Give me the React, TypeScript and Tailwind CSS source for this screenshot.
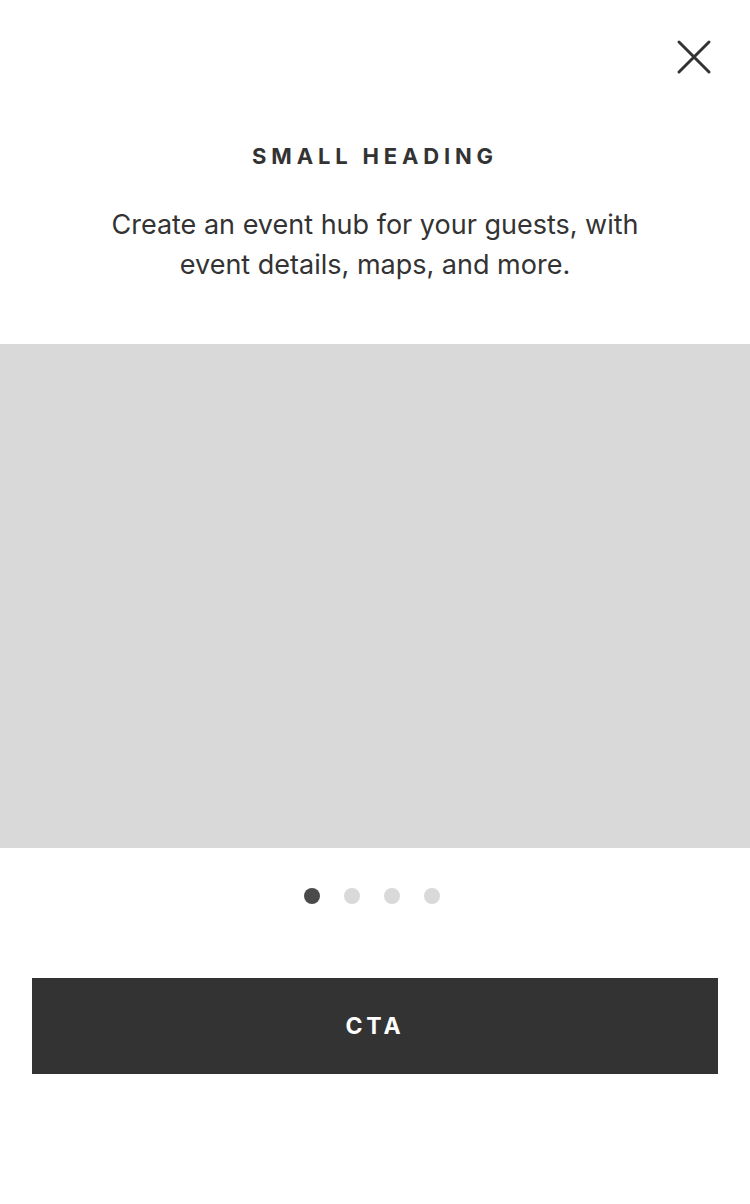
const slides = [0, 1, 2, 3];

export default function App() {
  return (
    <div className="w-[750px] h-[1204px] bg-white flex flex-col font-['Inter',sans-serif] text-[#333333]">
      <div className="flex justify-end pt-[38px] pr-[37px]">
        <button aria-label="Close" className="w-[38px] h-[38px] flex items-center justify-center">
          <svg width="38" height="38" viewBox="0 0 38 38" fill="none">
            <path d="M4 4L34 34M34 4L4 34" stroke="#333333" strokeWidth="3" strokeLinecap="round" />
          </svg>
        </button>
      </div>

      <div className="flex flex-col items-center text-center mt-[68px]">
        <h2 className="text-[22px] leading-[24px] font-bold tracking-[0.22em]">SMALL HEADING</h2>
        <p className="mt-[37px] text-[27px] leading-[40px] w-[600px]">
          Create an event hub for your guests, with event details, maps, and more.
        </p>
      </div>

      <div className="mt-[59px] h-[504px] bg-[#d9d9d9]" />

      <div className="flex justify-center gap-[24px] mt-[40px] pr-[6px]">
        {slides.map((i) => (
          <span
            key={i}
            className={i === 0 ? "w-4 h-4 rounded-full bg-[#4a4a4a]" : "w-4 h-4 rounded-full bg-[#d9d9d9]"}
          />
        ))}
      </div>

      <div className="px-8 mt-[74px]">
        <button className="w-full h-[96px] bg-[#333333] text-white text-[23px] font-bold tracking-[0.17em]">
          CTA
        </button>
      </div>
    </div>
  );
}
